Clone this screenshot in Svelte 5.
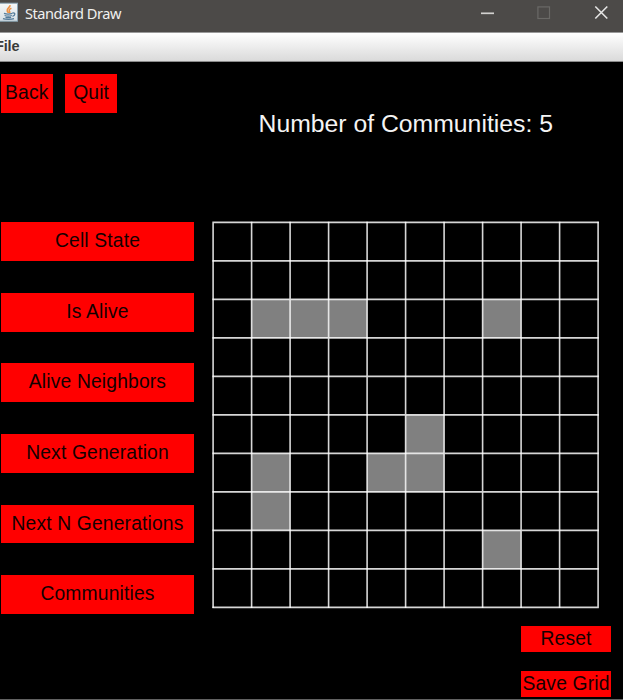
<script>
  const actions = [
    'Cell State',
    'Is Alive',
    'Alive Neighbors',
    'Next Generation',
    'Next N Generations',
    'Communities'
  ];
  const size = 10;
  const cell = 38.5;
  const alive = [
    [2, 1], [2, 2], [2, 3], [2, 7],
    [5, 5],
    [6, 1], [6, 4], [6, 5],
    [7, 1],
    [8, 7]
  ];
  const lines = Array.from({ length: size + 1 }, (_, i) => i * cell);
  const end = size * cell;
</script>

<div class="window">
  <header class="titlebar">
    <svg class="java" width="18" height="22" viewBox="0 0 18 22">
      <defs>
        <linearGradient id="tile" x1="0" y1="0" x2="0" y2="1">
          <stop offset="0" stop-color="#f7f8f8" />
          <stop offset="1" stop-color="#d5dfe5" />
        </linearGradient>
      </defs>
      <rect x="-2" y="3.2" width="19.5" height="18" fill="url(#tile)" stroke="#8ba5b5" stroke-width="1" />
      <path d="M10 5.2C10.5 7.6 6 8.4 7.2 11c.4 1 1.2 1.3 1.3 2M11.4 8.3c-2.5 1-2.7 2-1.8 3.1.5.7.2 1.2-.3 1.6" fill="none" stroke="#ed9144" stroke-width="1.6" />
      <path d="M4 13.3c2 .8 6 .8 8.3.1M4.6 15.5c2 .6 5.5.6 7.2 0M5.5 17.3c1.6.5 4 .5 5.6 0M3 18.7c2.5 1 8.5 1 11 0M12.3 13c3.5-.7 3.3 2.5.2 3.3" fill="none" stroke="#537a98" stroke-width="1.25" />
    </svg>
    <span class="title">Standard Draw</span>
    <svg class="controls" width="150" height="32" viewBox="0 0 150 32" fill="none">
      <path d="M8 13.3h13" stroke="#d2d1cf" stroke-width="1.7" />
      <rect x="64.9" y="6.9" width="11.6" height="11.6" stroke="#6a6966" stroke-width="1.2" />
      <path d="M122.3 6.5l12 12M134.3 6.5l-12 12" stroke="#e4e4e3" stroke-width="1.6" />
    </svg>
  </header>

  <nav class="menubar"><span>File</span></nav>

  <main>
    <div class="top">
      <button class="small">Back</button>
      <button class="small">Quit</button>
      <h1>Number of Communities: 5</h1>
    </div>

    <div class="board">
      <div class="actions">
        {#each actions as label}
          <button>{label}</button>
        {/each}
      </div>
      <svg class="grid" width="388" height="388" viewBox="0 0 388 388">
        <g transform="translate(1.1 1.4)">
          {#each alive as [row, col]}
            <rect x={col * cell} y={row * cell} width={cell} height={cell} fill="#808080" />
          {/each}
          {#each lines as p}
            <path d="M{p} -0.7V{end + 0.7}M-0.7 {p}H{end + 0.7}" stroke="#fff" stroke-opacity="0.84" stroke-width="1.6" />
          {/each}
        </g>
      </svg>
    </div>

    <div class="footer">
      <button>Reset</button>
      <button>Save Grid</button>
    </div>
  </main>
</div>

<style>
  .window {
    width: 623px;
    height: 700px;
    box-sizing: border-box;
    display: flex;
    flex-direction: column;
    overflow: hidden;
    background: #000;
    border-bottom: 1px solid #626262;
    font-family: "Liberation Sans", Arial, sans-serif;
  }
  .titlebar {
    height: 32px;
    flex: none;
    display: flex;
    align-items: flex-start;
    background: #4c4a48;
  }
  .java {
    flex: none;
  }
  .title {
    margin-left: 7px;
    font: 14.6px/27px "Noto Sans", "Open Sans", sans-serif;
    letter-spacing: -0.48px;
    color: #f0f0ef;
    white-space: nowrap;
  }
  .controls {
    margin-left: auto;
    flex: none;
  }
  .menubar {
    height: 30px;
    flex: none;
    box-sizing: border-box;
    border-top: 1px solid #999;
    border-bottom: 1px solid #8b8b8b;
    background: linear-gradient(#fff, #dadada);
  }
  .menubar span {
    display: block;
    margin-left: -5px;
    font-size: 14.5px;
    font-weight: bold;
    line-height: 27px;
    letter-spacing: -0.15px;
    color: #3a3a3a;
  }
  main {
    flex: 1;
    display: flex;
    flex-direction: column;
    padding: 12px 0 0 1px;
  }
  button {
    flex: none;
    box-sizing: border-box;
    border: 0;
    margin: 0;
    padding: 0 0 1px;
    background: #f00;
    color: #140000;
    font: 19.3px/20px "Liberation Sans", Arial, sans-serif;
    letter-spacing: 0.15px;
    white-space: nowrap;
  }
  .top {
    height: 147px;
    display: flex;
    align-items: flex-start;
    gap: 12.6px;
  }
  .small {
    width: 51.7px;
    height: 38.8px;
  }
  h1 {
    margin: 36px 0 0 129px;
    font-size: 24.75px;
    line-height: 28px;
    font-weight: normal;
    color: #f4f4f4;
    white-space: nowrap;
  }
  .board {
    display: flex;
    gap: 17.8px;
    height: 405px;
    padding-top: 0.3px;
  }
  .actions {
    width: 193px;
    display: flex;
    flex-direction: column;
    gap: 31.8px;
    padding-top: 1px;
  }
  .actions button {
    height: 38.8px;
  }
  .grid {
    flex: none;
  }
  .footer {
    width: 90px;
    margin-left: 520px;
    display: flex;
    flex-direction: column;
    gap: 19px;
  }
  .footer button {
    height: 26px;
    padding: 0;
  }
</style>
